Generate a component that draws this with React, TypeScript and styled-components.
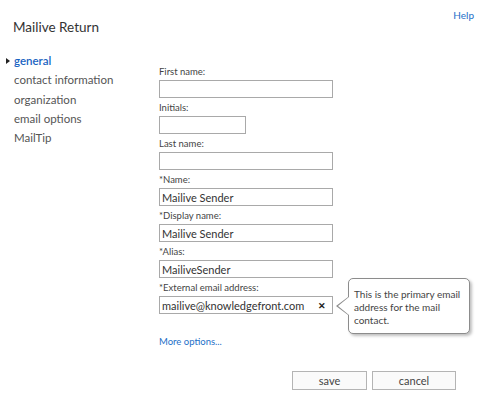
import { FC } from 'react';
import styled, { createGlobalStyle } from 'styled-components';

const GlobalStyle = createGlobalStyle`
  html, body {
    margin: 0;
    padding: 0;
    background: #ffffff;
  }

  body {
    font-family: Lato, "Open Sans", "Liberation Sans", sans-serif;
    color: #444444;
  }
`;

const Page = styled.div`
  width: 480px;
  height: 395px;
  position: relative;
  overflow: hidden;
`;

const Header = styled.div`
  display: flex;
  justify-content: space-between;
  align-items: flex-start;
`;

const Title = styled.h1`
  margin: 0;
  padding: 17px 0 0 13px;
  font-size: 13.5px;
  font-weight: 400;
  line-height: 20px;
  color: #333333;
`;

const HelpLink = styled.a`
  padding: 7px 6px 0 0;
  font-size: 10px;
  line-height: 16px;
  color: #1e6fc8;
  text-decoration: none;
`;

const Body = styled.div`
  display: flex;
  margin-top: 14px;
`;

const Nav = styled.ul`
  list-style: none;
  margin: 0;
  padding: 0 0 0 14px;
  width: 145px;
  flex-shrink: 0;
`;

const NavItem = styled.li<{ $active?: boolean }>`
  position: relative;
  font-size: 11.5px;
  line-height: 19.3px;
  color: ${p => (p.$active ? '#1a64c2' : '#555555')};
  font-weight: ${p => (p.$active ? 600 : 400)};

  &::before {
    content: '';
    display: ${p => (p.$active ? 'block' : 'none')};
    position: absolute;
    left: -8px;
    top: 7px;
    border-left: 4px solid #222222;
    border-top: 3px solid transparent;
    border-bottom: 3px solid transparent;
  }
`;

const Form = styled.div`
  display: flex;
  flex-direction: column;
  padding-top: 13px;
`;

const Field = styled.div`
  position: relative;
  display: flex;
  flex-direction: column;
  align-items: flex-start;
  margin-bottom: 2px;
`;

const Label = styled.label`
  font-size: 9.5px;
  line-height: 15px;
  margin-bottom: 1px;
  color: #444444;
`;

const InputBox = styled.div<{ $width: number }>`
  box-sizing: border-box;
  width: ${p => p.$width}px;
  height: 18px;
  border: 1px solid #a9a9a9;
  background: #ffffff;
  display: flex;
  align-items: center;
  padding: 0 3px 0 2px;
  font-size: 11px;
  color: #333333;
`;

const InputText = styled.span`
  flex: 1;
  white-space: nowrap;
`;

const ClearIcon = styled.span`
  font-size: 9px;
  font-weight: 700;
  color: #222222;
  margin-right: 3px;
`;

const Callout = styled.div`
  position: absolute;
  left: 189px;
  top: -2px;
  box-sizing: border-box;
  width: 122px;
  height: 56px;
  padding: 9px 4px 0 5px;
  border: 1px solid #8c8c8c;
  border-radius: 5px;
  background: #ffffff;
  box-shadow: 2px 2px 3px rgba(0, 0, 0, 0.25);
  font-size: 10px;
  line-height: 13px;
  color: #444444;

  &::before,
  &::after {
    content: '';
    position: absolute;
    top: 18px;
    border-top: 9px solid transparent;
    border-bottom: 9px solid transparent;
  }

  &::before {
    left: -13px;
    border-right: 12px solid #8c8c8c;
  }

  &::after {
    left: -11px;
    border-right: 11px solid #ffffff;
  }
`;

const MoreLink = styled.a`
  margin-top: 18px;
  font-size: 9.5px;
  line-height: 16px;
  color: #1e6fc8;
  text-decoration: none;
`;

const Actions = styled.div`
  display: flex;
  justify-content: flex-end;
  gap: 5px;
  margin-top: 21px;
  padding-right: 24px;
`;

const Button = styled.button<{ $width: number }>`
  box-sizing: border-box;
  width: ${p => p.$width}px;
  height: 19px;
  border: 1px solid #b4b4b4;
  background: #fafafa;
  font-family: inherit;
  font-size: 11px;
  color: #444444;
  padding: 0;
`;

type FieldDef = {
  label: string
  value?: string
  width: number
}

const fields: FieldDef[] = [
  { label: 'First name:', width: 174 },
  { label: 'Initials:', width: 87 },
  { label: 'Last name:', width: 174 },
  { label: '*Name:', value: 'Mailive Sender', width: 174 },
  { label: '*Display name:', value: 'Mailive Sender', width: 174 },
  { label: '*Alias:', value: 'MailiveSender', width: 174 },
];

const navItems = ['general', 'contact information', 'organization', 'email options', 'MailTip'];

const App: FC = () => {
  return (
    <Page>
      <GlobalStyle />
      <Header>
        <Title>Mailive Return</Title>
        <HelpLink href="#">Help</HelpLink>
      </Header>
      <Body>
        <Nav>
          {navItems.map((item, i) => (
            <NavItem key={item} $active={i === 0}>{item}</NavItem>
          ))}
        </Nav>
        <Form>
          {fields.map(f => (
            <Field key={f.label}>
              <Label>{f.label}</Label>
              <InputBox $width={f.width}>
                <InputText>{f.value}</InputText>
              </InputBox>
            </Field>
          ))}
          <Field>
            <Label>*External email address:</Label>
            <InputBox $width={174}>
              <InputText>mailive@knowledgefront.com</InputText>
              <ClearIcon>✕</ClearIcon>
            </InputBox>
            <Callout>This is the primary email address for the mail contact.</Callout>
          </Field>
          <MoreLink href="#">More options...</MoreLink>
        </Form>
      </Body>
      <Actions>
        <Button $width={75}>save</Button>
        <Button $width={84}>cancel</Button>
      </Actions>
    </Page>
  );
};

export default App;
